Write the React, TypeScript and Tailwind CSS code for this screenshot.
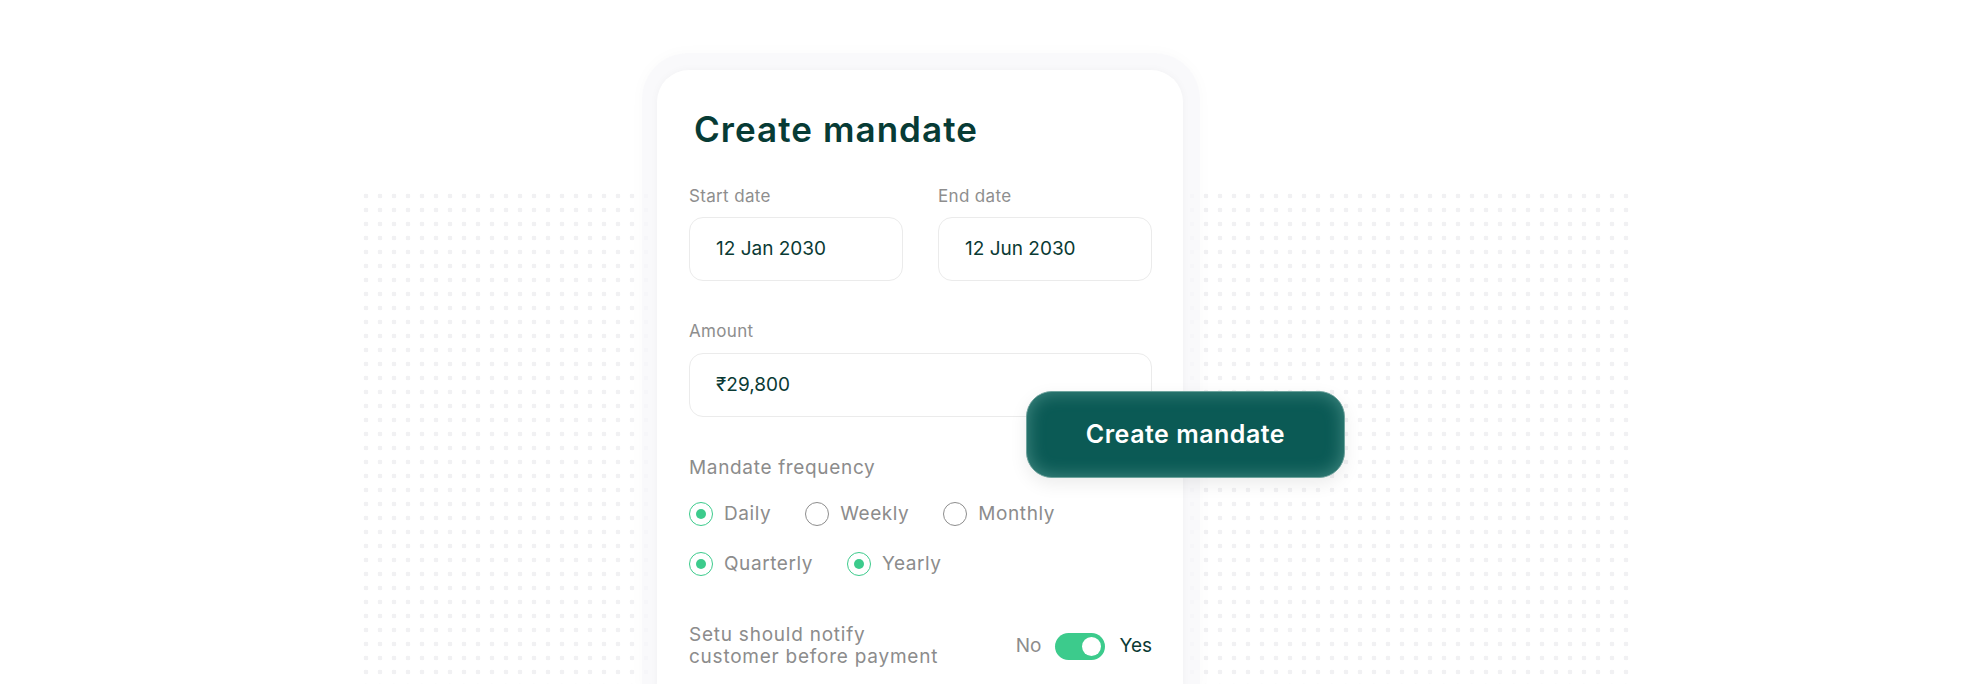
import { useState } from 'react'

type Freq = { label: string; checked: boolean }

const rowOne: Freq[] = [
  { label: 'Daily', checked: true },
  { label: 'Weekly', checked: false },
  { label: 'Monthly', checked: false },
]

const rowTwo: Freq[] = [
  { label: 'Quarterly', checked: true },
  { label: 'Yearly', checked: true },
]

function Radio({ label, checked }: Freq) {
  return (
    <div className="flex items-center gap-[11px]">
      <span
        className={`flex h-[24px] w-[24px] items-center justify-center rounded-full border-[1.5px] ${
          checked ? 'border-[#3ccb8c]' : 'border-[#8d8d8d]'
        }`}
      >
        {checked && <span className="h-[10px] w-[10px] rounded-full bg-[#3ccb8c]" />}
      </span>
      <span className="text-[19px] leading-[26px] tracking-[0.03em] text-[#8c8c8c]">{label}</span>
    </div>
  )
}

function DateField({ label, value }: { label: string; value: string }) {
  return (
    <div className="flex flex-col">
      <span className="text-[17px] leading-[24px] tracking-[0.02em] text-[#8e8e8e]">{label}</span>
      <div className="mt-[9px] flex h-[64px] items-center rounded-[14px] border border-[#ebebeb] px-[26px] text-[19px] text-[#0a3a34]">
        {value}
      </div>
    </div>
  )
}

export default function App() {
  const [notify, setNotify] = useState(true)

  return (
    <div className="relative h-[684px] w-full overflow-hidden bg-white font-['Inter',sans-serif]">
      {/* dotted canvas behind the card */}
      <div className="absolute left-[359px] top-[189px] h-[495px] w-[1274px] bg-[radial-gradient(circle,#f1f1f3_2.2px,transparent_2.6px)] bg-[length:14px_14px]" />

      <div className="relative ml-[642px] mt-[53px] w-[558px] rounded-t-[46px] bg-[#f8f8fa]/80 pl-[15px] pr-[17px] pt-[17px] shadow-[0_0_16px_rgba(0,0,0,0.025)]">
        <div className="h-[620px] w-[526px] rounded-t-[32px] bg-white pl-[32px] pr-[31px] pt-[38px] shadow-[0_0_8px_rgba(0,0,0,0.035)]">
          <h1 className="ml-[5px] text-[35px] font-semibold leading-[42px] tracking-[0.03em] text-[#073b35]">
            Create mandate
          </h1>

          <div className="mt-[34px] grid grid-cols-2 gap-[35px]">
            <DateField label="Start date" value="12 Jan 2030" />
            <DateField label="End date" value="12 Jun 2030" />
          </div>

          <div className="mt-[38px] flex flex-col">
            <span className="text-[17px] leading-[24px] tracking-[0.02em] text-[#8e8e8e]">Amount</span>
            <div className="relative mt-[10px] flex h-[64px] items-center rounded-[14px] border border-[#ebebeb] px-[26px] text-[19px] text-[#0a3a34]">
              ₹29,800
              <button className="absolute left-[336px] top-[37px] flex h-[87px] w-[319px] items-center justify-center rounded-[26px] border border-[#6ea39d] bg-[#0b5a55] text-[25px] font-semibold tracking-[0.02em] text-white shadow-[inset_0_0_18px_rgba(140,200,190,0.45),0_6px_18px_rgba(0,0,0,0.08)]">
                Create mandate
              </button>
            </div>
          </div>

          <div className="mt-[38px] text-[19px] leading-[26px] tracking-[0.035em] text-[#8c8c8c]">
            Mandate frequency
          </div>

          <div className="mt-[20px] flex gap-[34px]">
            {rowOne.map((f) => (
              <Radio key={f.label} {...f} />
            ))}
          </div>
          <div className="mt-[24px] flex gap-[34px]">
            {rowTwo.map((f) => (
              <Radio key={f.label} {...f} />
            ))}
          </div>

          <div className="mt-[47px] flex items-center justify-between">
            <p className="text-[19px] leading-[22px] tracking-[0.04em] text-[#8c8c8c]">
              Setu should notify
              <br />
              customer before payment
            </p>
            <div className="flex items-center gap-[14px] text-[19px]">
              <span className="text-[#8c8c8c]">No</span>
              <button
                onClick={() => setNotify(!notify)}
                className={`flex h-[27px] w-[50px] items-center rounded-full px-[4px] ${
                  notify ? 'justify-end bg-[#3ccb8c]' : 'justify-start bg-[#d4d4d4]'
                }`}
              >
                <span className="h-[19px] w-[19px] rounded-full bg-white" />
              </button>
              <span className="text-[#0a3a34]">Yes</span>
            </div>
          </div>
        </div>
      </div>
    </div>
  )
}
